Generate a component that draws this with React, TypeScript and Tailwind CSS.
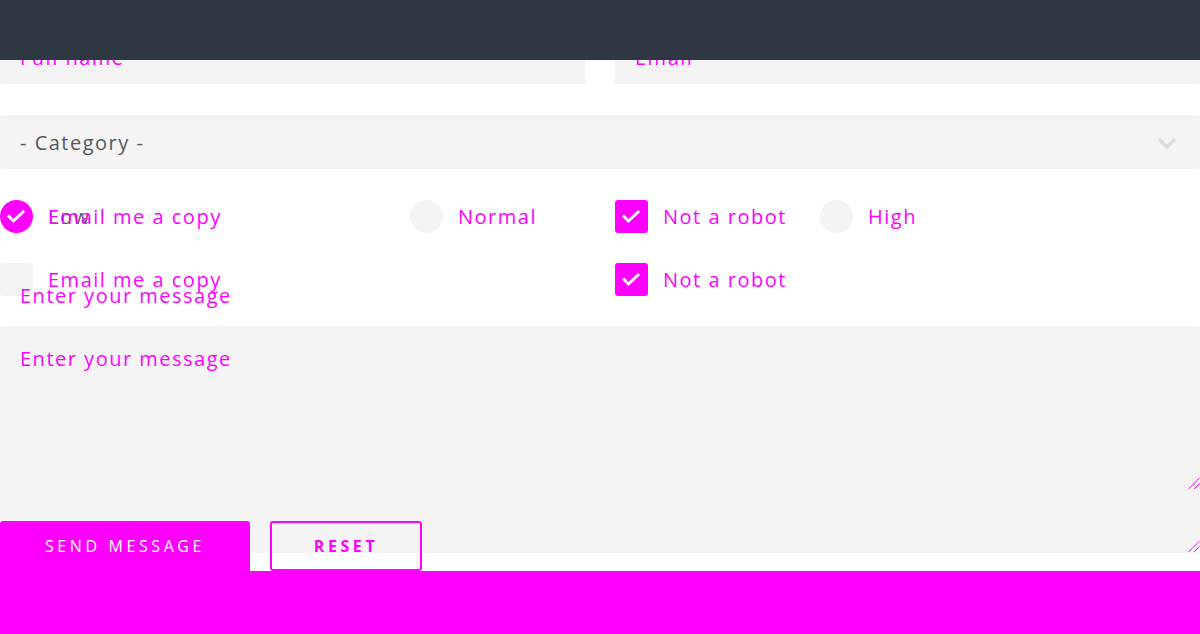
import React from 'react';

const MAGENTA = 'text-[#ff00ff]';

const Check: React.FC = () => (
  <svg width="33" height="33" viewBox="0 0 33 33" className="absolute inset-0">
    <path d="M9 16.5 L13.5 21 L23 12" fill="none" stroke="white" strokeWidth="3" strokeLinecap="square" />
  </svg>
);

const Grip: React.FC = () => (
  <svg width="13" height="13" viewBox="0 0 13 13" className="absolute right-0 bottom-0 pointer-events-none">
    <path d="M1.5 12 L12.5 1 M7 12 L12.5 6.5" stroke="#ff00ff" strokeWidth="1" fill="none" />
  </svg>
);

// radio option: circle + label
const Radio: React.FC<{ label: string; checked?: boolean; labelClass?: string; className?: string }> = ({
  label,
  checked,
  labelClass,
  className,
}) => (
  <div className={`flex items-center h-[33px] ${className ?? ''}`}>
    <span
      className={`relative w-[33px] h-[33px] rounded-full shrink-0 ${checked ? 'bg-[#ff00ff]' : 'bg-[#f4f4f4]'}`}
    >
      {checked && <Check />}
    </span>
    <span className={`ml-[15px] ${labelClass ?? MAGENTA}`}>{label}</span>
  </div>
);

// checkbox option: square + label
const Checkbox: React.FC<{ label: string; checked?: boolean; hideBox?: boolean; className?: string }> = ({
  label,
  checked,
  hideBox,
  className,
}) => (
  <div className={`flex items-center h-[33px] ${className ?? ''}`}>
    <span
      className={`relative w-[33px] h-[33px] rounded-[3px] shrink-0 ${
        hideBox ? 'bg-transparent' : checked ? 'bg-[#ff00ff]' : 'bg-[#f4f4f4]'
      }`}
    >
      {checked && !hideBox && <Check />}
    </span>
    <span className={`ml-[15px] ${MAGENTA}`}>{label}</span>
  </div>
);

const App: React.FC = () => {
  return (
    <div className="relative w-[1200px] h-[634px] overflow-hidden bg-white font-['Open_Sans',sans-serif] text-[20px] tracking-[0.075em]">
      {/* Header bar */}
      <header className="absolute top-0 left-0 right-0 h-[60px] bg-[#2e3842] z-20" />

      <form className="relative pt-[30px]">
        {/* Name + email */}
        <div className="grid grid-cols-2 gap-x-[30px]">
          <input
            type="text"
            placeholder="Full name"
            className="h-[54px] rounded-[3px] bg-[#f4f4f4] px-5 outline-none placeholder:text-[#ff00ff]"
          />
          <input
            type="email"
            placeholder="Email"
            className="h-[54px] rounded-[3px] bg-[#f4f4f4] px-5 outline-none placeholder:text-[#ff00ff]"
          />
        </div>

        {/* Category */}
        <div className="relative mt-[31px] h-[54px] rounded-[3px] bg-[#f4f4f4] flex items-center px-5 pt-[2px] text-[#55585d]">
          - Category -
          <svg width="20" height="12" viewBox="0 0 20 12" className="absolute right-[23px] top-[22px]">
            <path d="M2 2 L10 10 L18 2" fill="none" stroke="#dcdcdc" strokeWidth="3.5" />
          </svg>
        </div>

        {/* Options row 1 (radios and checkboxes share the row) */}
        <div className="mt-[31px] grid grid-cols-6 gap-x-[30px]">
          <Radio label="Low" checked labelClass="text-[#55585d]" className="col-start-1 col-span-2 row-start-1" />
          <Radio label="Normal" className="col-start-3 col-span-2 row-start-1" />
          <Radio label="High" className="col-start-5 col-span-2 row-start-1" />
          <Checkbox label="Email me a copy" hideBox className="col-start-1 col-span-3 row-start-1" />
          <Checkbox label="Not a robot" checked className="col-start-4 col-span-3 row-start-1" />
        </div>

        {/* Options row 2 */}
        <div className="mt-[30px] grid grid-cols-2 gap-x-[30px]">
          <Checkbox label="Email me a copy" />
          <Checkbox label="Not a robot" checked />
        </div>

        {/* Message */}
        <div className="relative mt-[30px]">
          <textarea
            placeholder="Enter your message"
            className="block w-full h-[227px] rounded-[3px] bg-[#f4f4f4] px-5 py-4 leading-[1.65] outline-none resize-none placeholder:text-[#ff00ff]"
          />
          <Grip />
        </div>

        {/* stray transparent textarea over the rows */}
        <div className="absolute left-0 right-0 top-[263px] h-[227px] z-10">
          <textarea
            placeholder="Enter your message"
            className="block w-full h-full bg-transparent px-5 py-4 leading-[1.65] outline-none resize-none placeholder:text-[#ff00ff]"
          />
          <Grip />
        </div>

        {/* Buttons */}
        <div className="relative z-10 -mt-[32px] flex gap-5">
          <button
            type="submit"
            className="w-[250px] h-[50px] rounded-t-[3px] bg-[#ff00ff] text-white text-[16px] tracking-[0.225em] uppercase"
          >
            Send message
          </button>
          <button
            type="reset"
            className="w-[152px] h-[50px] rounded-[3px] border-2 border-[#ff00ff] text-[#ff00ff] text-[16px] font-bold tracking-[0.225em] uppercase"
          >
            Reset
          </button>
        </div>
      </form>

      {/* Footer block */}
      <div className="h-[63px] bg-[#ff00ff]" />
    </div>
  );
};

export default App;
